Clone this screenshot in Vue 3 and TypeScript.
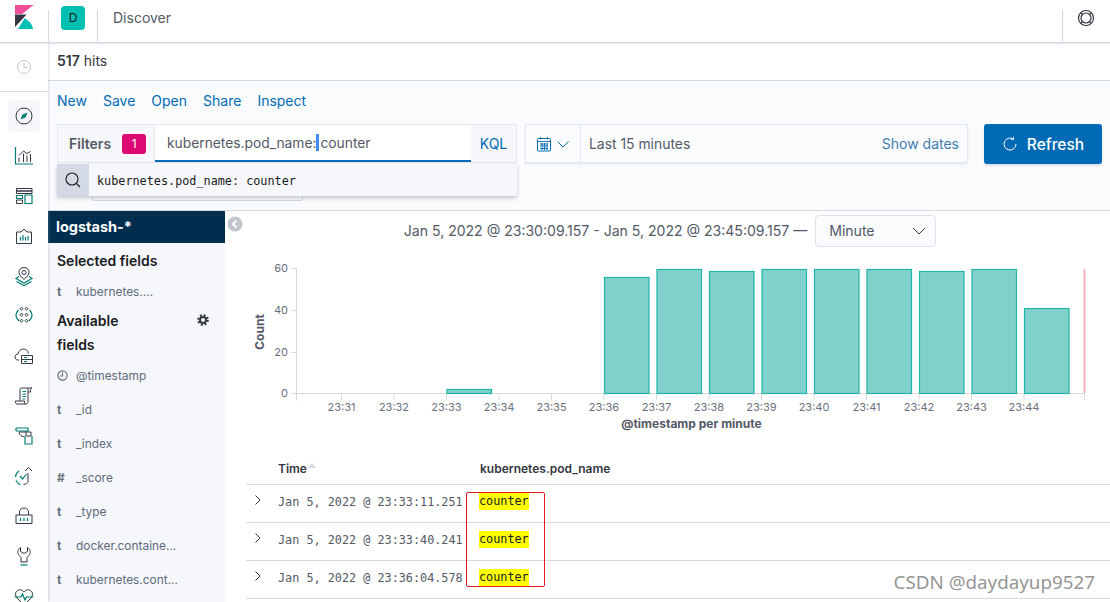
<script setup lang="ts">
interface NavIcon { name: string; dark: string; teal: string; fill?: string }
const navIcons: NavIcon[] = [
  { name: 'discover', dark: 'M10 2a8 8 0 1 0 0 16a8 8 0 1 0 0-16Z', teal: '', fill: 'M13.5 6.5L8.5 8.5L6.5 13.5L11.5 11.5Z' },
  { name: 'visualize', dark: 'M5 9.5L9.5 5L13 7.5L16.5 5.5M5 11.5V16M9.5 7.5V16M13 9.5V16M16.5 8V16', teal: 'M1.5 1V18H19' },
  { name: 'dashboard', dark: 'M2.5 2.5H18V5H2.5ZM2.5 5H18V7.5H2.5ZM2.5 14H8.5V17.5H2.5Z', teal: 'M2.5 9.5H8.5V12.5H2.5ZM11 9H18V17.5H11Z' },
  { name: 'canvas', dark: 'M2.5 6H7L10 3L13 6H17.5V17.5H2.5Z', teal: 'M6.5 14.5V11M9 14.5V9M11.5 14.5V11M14 14.5V10' },
  { name: 'maps', dark: 'M10 1.5C7 1.5 5 3.6 5 6.2C5 9 8 11.5 10 13.5C12 11.5 15 9 15 6.2C15 3.6 13 1.5 10 1.5ZM10 4.5a2 2 0 1 0 0 4a2 2 0 1 0 0-4Z', teal: 'M5 10.5L2 12.5L10 17L18 12.5L15 10.5M2.5 15.5L10 19.5L17.5 15.5' },
  { name: 'ml', dark: 'M7.5 1.5a1.3 1.3 0 1 0 .01 0ZM12.5 1.5a1.3 1.3 0 1 0 .01 0ZM7.5 7.5a1.3 1.3 0 1 0 .01 0ZM12.5 7.5a1.3 1.3 0 1 0 .01 0ZM7.5 13.5a1.3 1.3 0 1 0 .01 0ZM12.5 13.5a1.3 1.3 0 1 0 .01 0Z', teal: 'M4.5 4C2.5 6 1.5 9 2.5 11.5C3 13 4 14 5.5 15M15.5 4C17.5 6 18.5 9 17.5 11.5C17 13 16 14 14.5 15' },
  { name: 'infra', dark: 'M5 14H4C2 14 1 12.5 1 11C1 9.5 2.5 8 4 8C4.5 5 7 3 9.5 3C12 3 14 4.5 14.5 7.5M7.5 9.5H18.5V17.5H7.5ZM7.5 13.5H18.5', teal: 'M10 11.5H13M10 15.5H13' },
  { name: 'logs', dark: 'M6 15V3.5C6 2.5 6.5 2 7.5 2H18C17 2 16.5 3 16.5 4V6H14M14 2.5V15.5C14 17 13 18 12 18H3C2 18 1.5 17 1.5 16.5V15H10.5V16.5C10.5 17.5 11 18 12 18', teal: 'M8.5 5.5H12M8.5 8H12M8.5 10.5H12M8.5 13H11' },
  { name: 'apm', dark: 'M5 6H17V10H12V5M5 6.5C5.5 9 7.5 10.5 10 10.5', teal: 'M2 2V5H2M2 2H14V5H2M11 10V18H18V10' },
  { name: 'uptime', dark: 'M14 7V15C14 17 12 18.5 9.5 18.5M11 5L14.5 1.5L18 5', teal: 'M6 10L8.5 13L12.5 8M5 5C3 6.5 1.5 9 1.5 11M2 14.5C3 16.5 4.5 18 6.5 18.5' },
  { name: 'security', dark: 'M2 9H18V17.5H2ZM5.5 9V6C5.5 3.5 7.5 2 10 2C12.5 2 14.5 3.5 14.5 6V9', teal: 'M6.5 12V15M10 12V15M13.5 12V15' },
  { name: 'dev', dark: 'M6.5 1.5C4 3 3 6 4.5 8.5C5.5 10 6.5 10.5 7 11.5V16H13V11.5C13.5 10.5 14.5 10 15.5 8.5C17 6 16 3 13.5 1.5V5.5L10 7.5L6.5 5.5Z', teal: 'M6.5 19H13.5' },
  { name: 'monitoring', dark: 'M3 12C1 9.5 1 6 3.5 4.5C6 3 8.5 4 10 6C11.5 4 14 3 16.5 4.5C19 6 19 9.5 17 12L10 19Z', teal: 'M0.5 11H7L8.5 8L11 14L12.5 11H19.5' },
]

const availableFields = [
  { type: 't', name: '_id' },
  { type: 't', name: '_index' },
  { type: '#', name: '_score' },
  { type: 't', name: '_type' },
  { type: 't', name: 'docker.containe...' },
  { type: 't', name: 'kubernetes.cont...' },
]

const yTicks = [
  { label: '60', y: 18.5 },
  { label: '40', y: 60.5 },
  { label: '20', y: 102.5 },
  { label: '0', y: 143.5 },
]

const xLabels = ['23:31', '23:32', '23:33', '23:34', '23:35', '23:36', '23:37', '23:38', '23:39', '23:40', '23:41', '23:42', '23:43', '23:44']
const xStart = 116.5
const xStep = 52.5

const bars = [
  { i: 2, top: 139.5 },
  { i: 5, top: 27.5 },
  { i: 6, top: 19.5 },
  { i: 7, top: 21.5 },
  { i: 8, top: 19.5 },
  { i: 9, top: 19.5 },
  { i: 10, top: 19.5 },
  { i: 11, top: 21.5 },
  { i: 12, top: 19.5 },
  { i: 13, top: 58.5 },
]

const rows = ['Jan 5, 2022 @ 23:33:11.251', 'Jan 5, 2022 @ 23:33:40.241', 'Jan 5, 2022 @ 23:36:04.578']
</script>

<template>
  <div class="app">
    <header class="topbar">
      <div class="logo-cell">
        <svg class="logo" width="19" height="24" viewBox="0 0 19 24">
          <path d="M0 0H18.6L7 9H0Z" fill="#f04e98" />
          <path d="M0 9.6H6.4L11.6 9.6L0 22Z" fill="#343741" />
          <path d="M3 24L9.6 13.2C13.6 15.4 17.4 19 18 24Z" fill="#00bfb3" />
        </svg>
      </div>
      <div class="space-cell"><span class="space-badge">D</span></div>
      <div class="crumb">Discover</div>
      <div class="help-cell">
        <svg width="18" height="18" viewBox="0 0 18 18" fill="none" stroke="#343741" stroke-width="1.2">
          <circle cx="9" cy="9" r="7.5" />
          <circle cx="9" cy="9" r="5" />
          <path d="M3.7 3.7L5.5 5.5M14.3 3.7L12.5 5.5M3.7 14.3L5.5 12.5M14.3 14.3L12.5 12.5" />
        </svg>
      </div>
    </header>

    <div class="below">
      <nav class="nav">
        <div class="nav-recent">
          <svg width="16" height="16" viewBox="0 0 16 16" fill="none" stroke="#c2c6cc">
            <circle cx="8" cy="8" r="6.5" />
            <path d="M8 4V8.5H11.5" />
          </svg>
        </div>
        <div class="nav-list">
          <div v-for="(icon, idx) in navIcons" :key="icon.name" class="nav-item">
            <span class="nav-button" :class="{ active: idx === 0 }">
              <svg width="20" height="20" viewBox="0 0 20 20" fill="none">
                <path :d="icon.dark" stroke="#343741" />
                <path v-if="icon.teal" :d="icon.teal" stroke="#017d73" stroke-width="1.2" />
                <path v-if="icon.fill" :d="icon.fill" fill="#017d73" />
              </svg>
            </span>
          </div>
        </div>
      </nav>

      <div class="content">
        <div class="hits"><b>517</b> hits</div>

        <section class="toolbar">
          <div class="menu">
            <a>New</a><a>Save</a><a>Open</a><a>Share</a><a>Inspect</a>
          </div>
          <div class="query-row">
            <div class="query-group">
              <div class="filters-label">
                <b>Filters</b>
                <span class="count">1</span>
              </div>
              <div class="query-input">kubernetes.pod_name:<span class="caret"></span>counter</div>
              <div class="kql">KQL</div>
              <div class="suggest">
                <span class="suggest-icon">
                  <svg width="18" height="18" viewBox="0 0 18 18" fill="none" stroke="#1a1c21" stroke-width="1.1">
                    <circle cx="8" cy="8" r="6" />
                    <path d="M12.5 12.5L16 16" />
                  </svg>
                </span>
                <span class="suggest-text">kubernetes.pod_name: counter</span>
              </div>
            </div>
            <div class="date-group">
              <div class="date-quick">
                <svg width="16" height="16" viewBox="0 0 16 16" fill="none" stroke="#006bb4">
                  <rect x="1.5" y="2.5" width="13" height="12.5" rx="1" />
                  <path d="M1.5 5.5H14.5M4.5 1V3.5M11.5 1V3.5M4 8H12M4 10H12M4 12.5H12M6 7V14M8.5 7V14M11 7V14" stroke-width=".9" />
                </svg>
                <svg width="14" height="14" viewBox="0 0 14 14" fill="none" stroke="#006bb4">
                  <path d="M1.5 4.5L7 10L12.5 4.5" />
                </svg>
              </div>
              <div class="date-range">Last 15 minutes</div>
              <a class="show-dates">Show dates</a>
            </div>
            <button class="refresh">
              <svg width="16" height="16" viewBox="0 0 16 16" fill="none" stroke="#fff">
                <path d="M11.5 3.2A6 6 0 1 0 14 8" />
                <path d="M11.5 .8V3.6H8.8" stroke-width=".8" />
              </svg>
              Refresh
            </button>
          </div>
          <div class="filter-ghost"></div>
        </section>

        <div class="lower">
          <aside class="sidebar">
            <div class="index">logstash-*</div>
            <h3 class="side-title">Selected fields</h3>
            <div class="field"><span class="ftype">t</span><span>kubernetes....</span></div>
            <div class="available">
              <h3 class="side-title wrap">Available fields</h3>
              <svg class="gear" width="12" height="12" viewBox="0 0 12 12" fill="none" stroke="#343741">
                <circle cx="6" cy="6" r="3" stroke-width="2" />
                <circle cx="6" cy="6" r="4.8" stroke-width="2" stroke-dasharray="2 1.77" />
              </svg>
            </div>
            <div class="field">
              <span class="ftype">
                <svg width="11" height="11" viewBox="0 0 11 11" fill="none" stroke="#69707d" stroke-width="1.2">
                  <circle cx="5.5" cy="5.5" r="4.6" />
                  <path d="M5.5 2.5V6H3" />
                </svg>
              </span>
              <span>@timestamp</span>
            </div>
            <div v-for="f in availableFields" :key="f.name" class="field">
              <span class="ftype">{{ f.type }}</span><span>{{ f.name }}</span>
            </div>
          </aside>

          <main class="main">
            <span class="collapse">
              <svg width="16" height="16" viewBox="0 0 16 16">
                <circle cx="8" cy="8" r="7.5" fill="#c2c6cc" />
                <path d="M9.5 4.5L6 8L9.5 11.5" fill="none" stroke="#fff" stroke-width="2" />
              </svg>
            </span>
            <div class="date-title">
              <span class="range-text">Jan 5, 2022 @ 23:30:09.157 - Jan 5, 2022 @ 23:45:09.157 —</span>
              <div class="interval">
                <span class="range-text">Minute</span>
                <svg width="14" height="14" viewBox="0 0 14 14" fill="none" stroke="#343741">
                  <path d="M1 4L7 10L13 4" />
                </svg>
              </div>
            </div>

            <svg class="chart" width="885" height="200" viewBox="0 0 885 200">
              <g stroke="#d9d9d9" fill="none">
                <path d="M71.5 18V150.5" />
                <path d="M71.5 143.5H859.5" />
                <path v-for="t in yTicks" :key="t.label" :d="`M66 ${t.y}H71.5`" />
                <path v-for="(l, i) in xLabels" :key="l" :d="`M${xStart + i * xStep} 143.5V150`" />
                <path d="M859.5 143.5V150" />
              </g>
              <g class="tick-text">
                <text v-for="t in yTicks" :key="t.label" x="63" :y="t.y + 3" text-anchor="end">{{ t.label }}</text>
                <text v-for="(l, i) in xLabels" :key="l" :x="xStart + i * xStep" y="161" text-anchor="middle">{{ l }}</text>
              </g>
              <rect
                v-for="b in bars"
                :key="b.i"
                :x="xStart + b.i * xStep + 0.5"
                :y="b.top"
                width="44.5"
                :height="143.5 - b.top"
                fill="#80d1cb"
                stroke="#1fb5a8"
                stroke-width="1.2"
              />
              <path d="M859.5 19V143" stroke="#f3b3ba" stroke-width="2" />
              <text class="axis-title" transform="translate(39 82) rotate(-90)" text-anchor="middle">Count</text>
              <text class="axis-title" x="466.5" y="178" text-anchor="middle">@timestamp per minute</text>
            </svg>

            <div class="table">
              <div class="thead">
                <div class="th-time">Time<i class="sort"></i></div>
                <div class="th-value">kubernetes.pod_name</div>
              </div>
              <div v-for="r in rows" :key="r" class="tr">
                <svg class="expand" width="12" height="12" viewBox="0 0 12 12" fill="none" stroke="#343741">
                  <path d="M3.5 1.5L8 6L3.5 10.5" />
                </svg>
                <span class="td-time">{{ r }}</span>
                <mark class="td-value">counter</mark>
              </div>
              <div class="redbox"></div>
            </div>
          </main>
        </div>
      </div>
    </div>
    <div class="watermark">CSDN @daydayup9527</div>
  </div>
</template>

<style>
html,
body {
  margin: 0;
  background: #fff;
  overflow: hidden;
}
</style>

<style scoped>
.app {
  position: relative;
  width: 1110px;
  height: 602px;
  overflow: hidden;
  display: flex;
  flex-direction: column;
  font-family: Inter, "Liberation Sans", sans-serif;
  font-size: 14px;
  color: #343741;
  background: #fff;
}
.topbar {
  flex: none;
  height: 42px;
  display: flex;
  border-bottom: 1px solid #d3dae6;
  box-shadow: 0 1px 1px rgba(152, 162, 179, 0.25);
  position: relative;
  z-index: 2;
  background: #fff;
}
.logo-cell {
  width: 48px;
  padding: 5px 0 0 15px;
  box-sizing: border-box;
}
.logo {
  display: block;
}
.space-cell {
  width: 48px;
  height: 32px;
  margin-top: 10px;
  border-left: 1px solid #d3dae6;
  border-right: 1px solid #d3dae6;
  position: relative;
}
.space-badge {
  position: absolute;
  left: 12px;
  top: -4px;
  width: 24px;
  height: 24px;
  border-radius: 4px;
  background: #00bfb3;
  color: #1a1c21;
  font-size: 12px;
  line-height: 24px;
  text-align: center;
}
.crumb {
  margin-left: 15px;
  line-height: 36px;
  color: #535966;
  font-size: 14px;
}
.help-cell {
  margin-left: auto;
  width: 47px;
  height: 32px;
  margin-top: 10px;
  border-left: 1px solid #d3dae6;
  position: relative;
}
.help-cell svg {
  position: absolute;
  left: 14px;
  top: -1px;
}
.below {
  flex: 1;
  min-height: 0;
  display: flex;
}
.nav {
  flex: none;
  width: 48px;
  box-shadow: 1px 0 2px rgba(152, 162, 179, 0.35);
  position: relative;
  z-index: 1;
  background: #fff;
}
.nav-recent {
  height: 48px;
  border-bottom: 1px solid #d3dae6;
  display: flex;
  align-items: center;
  justify-content: center;
}
.nav-list {
  padding-top: 4px;
}
.nav-item {
  height: 40px;
  display: flex;
  align-items: center;
  justify-content: center;
}
.nav-button {
  width: 32px;
  height: 32px;
  border-radius: 4px;
  display: flex;
  align-items: center;
  justify-content: center;
}
.nav-button.active {
  background: #f5f7fa;
}
.content {
  flex: 1;
  min-width: 0;
  display: flex;
  flex-direction: column;
}
.hits {
  flex: none;
  height: 37px;
  line-height: 36px;
  padding-left: 9px;
  border-bottom: 1px solid #d3dae6;
  color: #343741;
}
.hits b {
  font-weight: 600;
}
.toolbar {
  flex: none;
  height: 119px;
  border-bottom: 1px solid #d3dae6;
  background: #fafbfd;
  padding: 10px 8px 0 9px;
}
.menu {
  display: flex;
  gap: 16px;
  height: 20px;
  line-height: 20px;
  color: #006bb4;
}
.query-row {
  margin-top: 13px;
  display: flex;
  gap: 8px;
  align-items: flex-start;
}
.query-group {
  position: relative;
  flex: none;
  width: 460px;
  height: 39px;
  box-sizing: border-box;
  display: flex;
  border: 1px solid #e3e7ee;
  background: #f5f7fa;
}
.filters-label {
  width: 97px;
  box-sizing: border-box;
  padding-left: 11px;
  display: flex;
  align-items: center;
  border-right: 1px solid #e3e7ee;
}
.filters-label b {
  font-weight: 600;
  color: #535966;
}
.count {
  margin-left: 11px;
  width: 24px;
  height: 20px;
  border-radius: 3px;
  background: #dd0a73;
  color: #fff;
  font-size: 12px;
  line-height: 20px;
  text-align: center;
}
.query-input {
  width: 316px;
  box-sizing: border-box;
  background: #fff;
  border-bottom: 2px solid #006bb4;
  padding-left: 12px;
  line-height: 37px;
  color: #535966;
  font-size: 13.8px;
  white-space: nowrap;
}
.caret {
  display: inline-block;
  width: 3px;
  height: 17px;
  margin: 0 1px 0 0;
  vertical-align: -3px;
  background: #3d8ef0;
}
.kql {
  flex: 1;
  text-align: center;
  color: #006bb4;
  line-height: 37px;
}
.suggest {
  position: absolute;
  left: -1px;
  top: 39px;
  width: 460px;
  height: 32px;
  display: flex;
  background: #f5f7fa;
  box-shadow: 0 2px 4px rgba(65, 78, 101, 0.3);
  z-index: 3;
}
.suggest-icon {
  width: 32px;
  background: #d3dae6;
  display: flex;
  align-items: center;
  justify-content: center;
}
.suggest-text {
  padding-left: 8px;
  line-height: 34px;
  font-family: "DejaVu Sans Mono", "Liberation Mono", monospace;
  font-size: 11.8px;
  color: #1a1c21;
}
.date-group {
  flex: none;
  width: 443px;
  height: 39px;
  box-sizing: border-box;
  display: flex;
  align-items: center;
  border: 1px solid #e3e7ee;
  background: #fbfcfd;
  box-shadow: 0 1px 2px rgba(152, 162, 179, 0.25);
}
.date-quick {
  width: 54px;
  height: 100%;
  display: flex;
  align-items: center;
  justify-content: center;
  gap: 4px;
  border-right: 1px solid #e3e7ee;
}
.date-range {
  margin-left: 8px;
  font-size: 13.9px;
  color: #535966;
}
.show-dates {
  margin-left: auto;
  margin-right: 8px;
  color: #3f7cb0;
}
.refresh {
  flex: none;
  margin-left: 8px;
  width: 118px;
  height: 40px;
  padding: 0;
  border: 0;
  border-radius: 3px;
  background: #006bb4;
  color: #fff;
  font: 500 15.5px Inter, "Liberation Sans", sans-serif;
  display: flex;
  align-items: center;
  justify-content: center;
  gap: 9px;
  box-shadow: 0 2px 2px rgba(152, 162, 179, 0.3);
}
.filter-ghost {
  margin: 8px 0 0 35px;
  width: 211px;
  height: 29px;
  box-sizing: border-box;
  border: 1px solid #d3dae6;
  border-radius: 2px;
}
.lower {
  flex: 1;
  min-height: 0;
  display: flex;
}
.sidebar {
  flex: none;
  width: 177px;
  background: #f5f7fa;
}
.index {
  height: 32px;
  line-height: 32px;
  padding-left: 8px;
  background: #012e4f;
  color: #fff;
  font-weight: 700;
  font-size: 14.5px;
}
.side-title {
  margin: 6px 0 1px;
  padding-left: 9px;
  font-size: 14px;
  line-height: 24px;
  font-weight: 600;
  color: #1a1c21;
}
.side-title.wrap {
  margin: 0;
  width: 100px;
}
.available {
  position: relative;
  margin-top: 1px;
  margin-bottom: 1px;
}
.gear {
  position: absolute;
  right: 16px;
  top: 5px;
}
.field {
  height: 34px;
  display: flex;
  align-items: center;
  font-size: 11.9px;
  color: #5f6b7d;
  white-space: nowrap;
}
.ftype {
  width: 28px;
  box-sizing: border-box;
  padding-left: 9px;
  font-weight: 700;
  color: #69707d;
  display: flex;
  align-items: center;
}
.main {
  position: relative;
  flex: 1;
  min-width: 0;
}
.collapse {
  position: absolute;
  left: 2px;
  top: 5px;
  line-height: 0;
}
.date-title {
  height: 32px;
  padding: 4px 0 3px 5px;
  display: flex;
  justify-content: center;
  align-items: center;
  gap: 8px;
  font-size: 14.05px;
  color: #535966;
}
.range-text {
  margin-bottom: 2px;
}
.interval {
  width: 121px;
  height: 32px;
  box-sizing: border-box;
  padding: 0 9px 0 13px;
  display: flex;
  align-items: center;
  justify-content: space-between;
  border: 1px solid #dde2ea;
  border-radius: 4px;
  background: #fafbfd;
}
.chart {
  display: block;
}
.tick-text text {
  font-family: Inter, "Liberation Sans", sans-serif;
  font-size: 11px;
  fill: #69707d;
}
.axis-title {
  font-family: Inter, "Liberation Sans", sans-serif;
  font-size: 12px;
  font-weight: 700;
  fill: #535966;
}
.table {
  position: relative;
  margin-left: 21px;
}
.thead {
  height: 32px;
  padding-top: 2px;
  border-bottom: 1px solid #d3dae6;
  display: flex;
  align-items: center;
  font-size: 12px;
  font-weight: 600;
}
.th-time {
  margin-left: 32px;
  width: 202px;
  display: flex;
  align-items: center;
}
.sort {
  margin: -6px 0 0 1px;
  width: 0;
  height: 0;
  border: 4px solid transparent;
  border-top: 0;
  border-bottom: 5px solid #d3dae6;
}
.tr {
  height: 38px;
  box-sizing: border-box;
  padding-bottom: 4px;
  display: flex;
  align-items: center;
  border-bottom: 1px solid #d3dae6;
  font-family: "DejaVu Sans Mono", "Liberation Mono", monospace;
  font-size: 11.8px;
}
.expand {
  margin: -3px 0 0 6px;
}
.td-time {
  margin-left: 14px;
  width: 201px;
  color: #535966;
  white-space: nowrap;
}
.td-value {
  margin-left: 0;
  background: #ff0;
  color: #1a1c21;
  line-height: 17px;
}
.redbox {
  position: absolute;
  left: 220px;
  top: 42px;
  width: 79px;
  height: 95px;
  box-sizing: border-box;
  border: 1px solid #e01b24;
  border-radius: 2px;
}
.watermark {
  position: absolute;
  right: 15px;
  bottom: 7px;
  font-family: "Noto Sans", "Liberation Sans", sans-serif;
  font-size: 18.8px;
  color: rgba(120, 120, 120, 0.8);
}
</style>
